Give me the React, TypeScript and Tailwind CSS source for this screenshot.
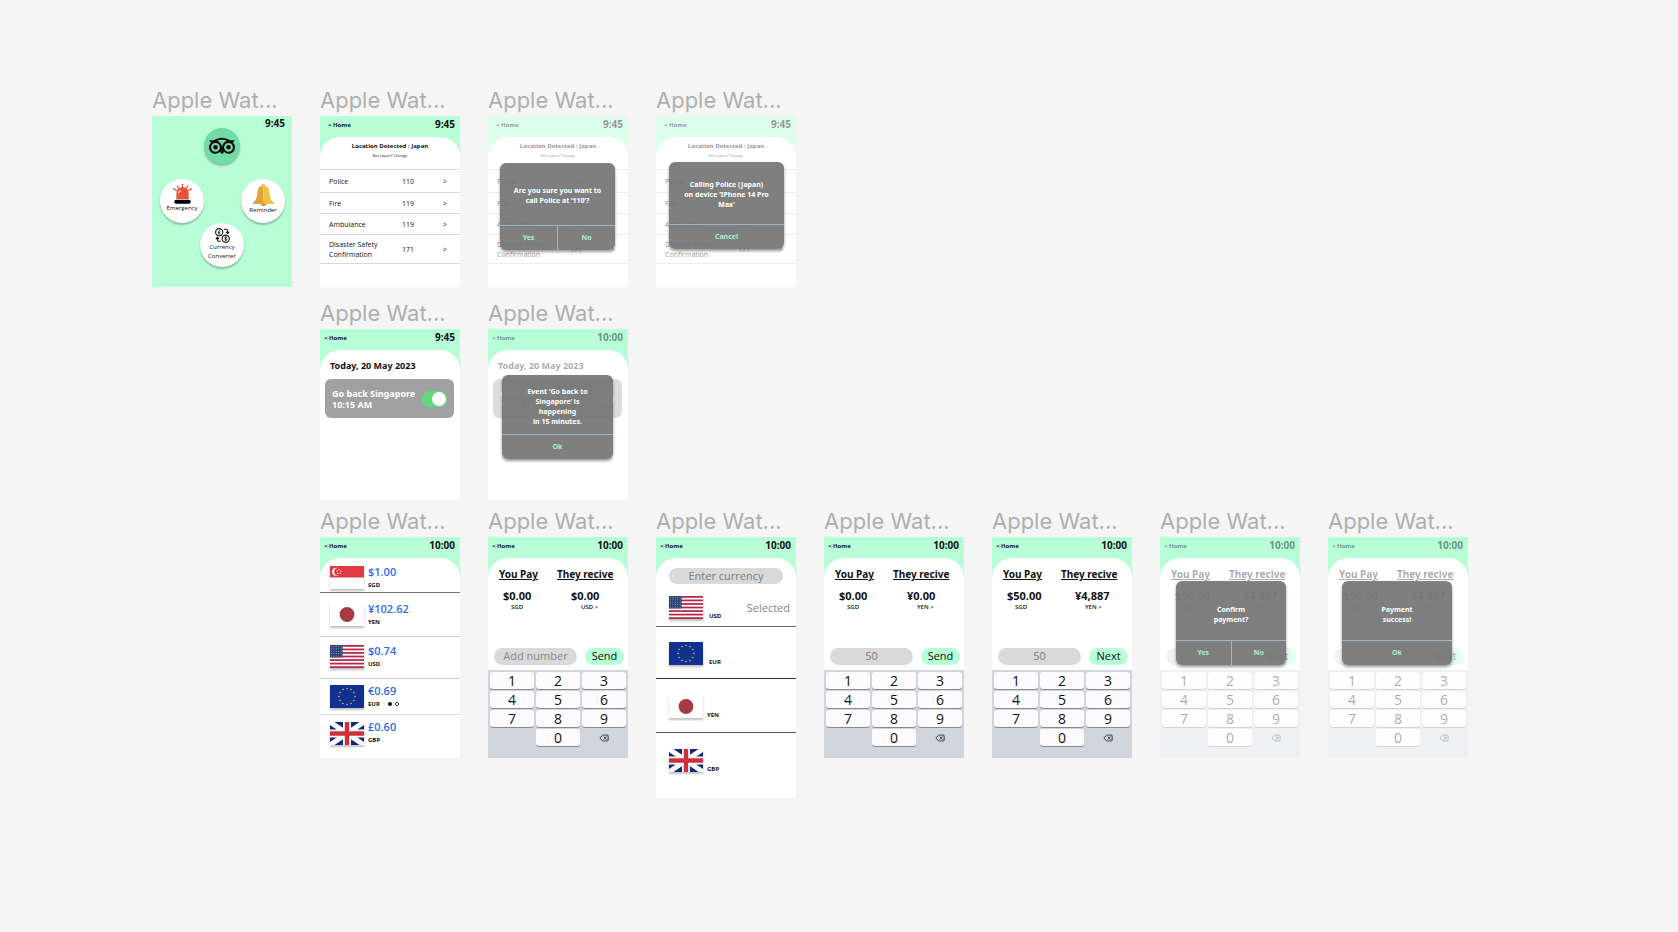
import type { ReactNode } from "react";
import { Delete } from "lucide-react";
import { SiTripadvisor } from "react-icons/si";

type Country = "SG" | "JP" | "US" | "EU" | "UK";

const COUNTRY_NAMES: Record<Country, string> = {
  SG: "Singapore",
  JP: "Japan",
  US: "United States",
  EU: "European Union",
  UK: "United Kingdom",
};

const STARS = Array.from({ length: 12 }, (_, i) => {
  const angle = (i * Math.PI) / 6;
  return { x: 17 + 8 * Math.sin(angle), y: 11.5 - 8 * Math.cos(angle) };
});

function FlagArt({ country }: { country: Country }) {
  switch (country) {
    case "SG":
      return (
        <>
          <rect width="34" height="23" fill="#fff" />
          <rect width="34" height="11.5" fill="#df3b40" />
          <circle cx="6.2" cy="5.7" r="4" fill="#fff" />
          <circle cx="7.8" cy="5.7" r="3.7" fill="#df3b40" />
          <g fill="#fff">
            <circle cx="9" cy="3.6" r="0.7" />
            <circle cx="7.2" cy="5" r="0.7" />
            <circle cx="11" cy="5" r="0.7" />
            <circle cx="7.9" cy="7.4" r="0.7" />
            <circle cx="10.3" cy="7.4" r="0.7" />
          </g>
        </>
      );
    case "JP":
      return (
        <>
          <rect width="34" height="23" fill="#fff" />
          <circle cx="17" cy="11.5" r="7.4" fill="#a43a42" />
        </>
      );
    case "US":
      return (
        <>
          <rect width="34" height="23" fill="#fff" />
          {[0, 1, 2, 3, 4, 5, 6].map((i) => (
            <rect key={i} y={i * 3.54} width="34" height="1.77" fill="#b22c4a" />
          ))}
          <rect width="12.6" height="12.4" fill="#2b4372" />
          {[0, 1, 2, 3, 4].map((r) =>
            [0, 1, 2, 3, 4].map((c) => (
              <circle key={`${r}-${c}`} cx={1.5 + c * 2.4} cy={1.5 + r * 2.35} r="0.5" fill="#a9b6cf" />
            )),
          )}
        </>
      );
    case "EU":
      return (
        <>
          <rect width="34" height="23" fill="#113092" />
          {STARS.map((s, i) => (
            <circle key={i} cx={s.x} cy={s.y} r="0.8" fill="#d9c63a" />
          ))}
        </>
      );
    case "UK":
      return (
        <>
          <rect width="34" height="23" fill="#12297e" />
          <path d="M0 0L34 23M34 0L0 23" stroke="#fff" strokeWidth="5" />
          <path d="M17 0V23M0 11.5H34" stroke="#fff" strokeWidth="8" />
          <path d="M17 0V23M0 11.5H34" stroke="#cd3038" strokeWidth="4.4" />
        </>
      );
  }
}

function Flag({ country }: { country: Country }) {
  return (
    <svg
      viewBox="0 0 34 23"
      role="img"
      aria-label={COUNTRY_NAMES[country]}
      className="h-[23px] w-[34px] shrink-0 shadow-[0_2px_2px_rgba(0,0,0,0.25)]"
    >
      <FlagArt country={country} />
    </svg>
  );
}

function SirenIcon() {
  return (
    <svg viewBox="0 0 19 20" className="h-5 w-[19px]" aria-hidden="true">
      <path d="M3.4 15V9.2a6.1 6.1 0 0 1 12.2 0V15z" fill="#e8503a" />
      <path
        d="M9.5 0v4M4 1.6l2 3.2M15 1.6l-2 3.2M0 4.6l4 2M19 4.6l-4 2"
        stroke="#e8503a"
        strokeWidth="1.2"
      />
      <path d="M5.6 9.4a3.4 3.4 0 0 1 2-2.9" stroke="#fff" strokeWidth="1.1" fill="none" />
      <rect x="1.2" y="15.8" width="16.6" height="4" rx="2" fill="#000" />
    </svg>
  );
}

function BellIcon() {
  return (
    <svg viewBox="0 0 21 22" className="h-[22px] w-[21px]" aria-hidden="true">
      <circle cx="10.5" cy="19.4" r="2.6" fill="#e0862f" />
      <path
        d="M10.5 0a1.8 1.8 0 0 0-1.8 1.9C5.600 2.700 4.700 5 4.500 8c-.3 5-1.200 8-4.300 10.600V20h10.300z"
        fill="#e5a13c"
      />
      <path
        d="M10.5 0a1.8 1.8 0 0 1 1.8 1.9C15.400 2.700 16.300 5 16.500 8c.3 5 1.200 8 4.300 10.600V20H10.500z"
        fill="#ecc544"
      />
    </svg>
  );
}

function ExchangeIcon() {
  return (
    <svg
      viewBox="0 0 15 15"
      className="h-[15px] w-[15px]"
      fill="none"
      stroke="#111"
      strokeWidth="1.1"
      aria-hidden="true"
    >
      <circle cx="4.2" cy="4.2" r="3.6" />
      <circle cx="10.7" cy="10.7" r="3.6" />
      <path d="M5.500 2.900C4.600 2.200 3.600 2.600 3.800 3.700L4 5.800M2.900 4.300H5M3 5.900H5.600" strokeWidth="0.8" />
      <path
        d="M12 9.600C11 8.700 9.500 9.100 9.600 9.900C9.700 10.900 11.900 10.500 11.900 11.600C11.800 12.500 10.200 12.500 9.500 11.800M10.700 8.400V13"
        strokeWidth="0.8"
      />
      <path d="M9 1.300H11.200A1.400 1.400 0 0 1 12.600 2.700V5.200M11 3.900L12.600 5.500L14.200 3.900" />
      <path d="M5.800 13.200H3.800A1.400 1.400 0 0 1 2.400 11.800V9.700M.8 11L2.400 9.400L4 11" />
    </svg>
  );
}

function Artboard({ className = "", children }: { className?: string; children: ReactNode }) {
  return (
    <section className={`w-[140px] ${className}`}>
      <h2 className="h-9 truncate pt-1 font-[Inter,sans-serif] text-[22px] leading-8 text-[#afafaf]">
        Apple Wat...
      </h2>
      {children}
    </section>
  );
}

type Dim = "none" | "all" | "content";

interface ScreenProps {
  time: string;
  size?: "short" | "tall" | "long";
  homeInset?: "wide" | "narrow";
  dim?: Dim;
  dialog?: ReactNode;
  children: ReactNode;
}

function Screen({ time, size = "short", homeInset = "narrow", dim = "none", dialog, children }: ScreenProps) {
  const heights = { short: "h-[171px]", tall: "h-[221px]", long: "h-[261px]" };
  return (
    <div className={`relative bg-white ${heights[size]}`}>
      <div className={`flex h-full flex-col bg-[#b7fed7] ${dim === "all" ? "opacity-45" : ""}`}>
        <header
          className={`flex h-[21px] shrink-0 items-start justify-between pr-[5px] ${
            homeInset === "wide" ? "pl-2" : "pl-1"
          } ${dim === "content" ? "opacity-45" : ""}`}
        >
          <a href="#home" className="pt-[3px] font-['Noto_Sans',sans-serif] text-[6px] leading-3 font-bold">
            &lt; Home
          </a>
          <time className="pt-[2px] text-[10px] leading-3 font-bold">{time}</time>
        </header>
        <div className="min-h-0 grow rounded-t-[20px] bg-white">
          <div className={`flex h-full flex-col ${dim === "content" ? "opacity-35" : ""}`}>{children}</div>
        </div>
      </div>
      {dialog}
    </div>
  );
}

interface DialogProps {
  placement: string;
  actions: string[];
  inset?: string;
  children: ReactNode;
}

function Dialog({ placement, actions, inset = "pt-1", children }: DialogProps) {
  return (
    <div
      role="dialog"
      className={`absolute flex flex-col overflow-hidden rounded-md bg-[#717171]/90 font-['Noto_Sans',sans-serif] shadow-[0_2px_3px_rgba(0,0,0,0.4)] ${placement}`}
    >
      <p
        className={`flex grow flex-col justify-center text-center text-[7px] leading-[10px] font-bold text-white ${inset}`}
      >
        {children}
      </p>
      <div className="flex h-[25px] shrink-0 divide-x divide-[#9fb6d3] border-t border-[#9fb6d3]">
        {actions.map((action) => (
          <button key={action} type="button" className="flex-1 text-[7px] leading-3 font-bold text-[#a9f0cf]">
            {action}
          </button>
        ))}
      </div>
    </div>
  );
}

const CONTACTS = [
  { name: "Police", number: "110", height: "h-[23px]" },
  { name: "Fire", number: "119", height: "h-[21px]" },
  { name: "Ambulance", number: "119", height: "h-[21px]" },
  { name: "Disaster Safety Confirmation", number: "171", height: "h-[29px]" },
];

function EmergencyContent() {
  return (
    <>
      <div className="flex h-8 flex-col items-center pt-1 text-center">
        <p className="text-[6px] leading-[10px] font-bold">Location Detected : Japan</p>
        <p className="text-[4px] leading-[10px]">
          Not Japan? <a href="#change">Change</a>
        </p>
      </div>
      <table className="w-full table-fixed border-t border-[#d9d9d9] text-[7px] leading-[10px]">
        <tbody>
          {CONTACTS.map((c) => (
            <tr key={c.name} className={`border-b border-[#d9d9d9] ${c.height}`}>
              <td className="w-[82px] pt-[2px] pr-4 pb-0 pl-[9px]">{c.name}</td>
              <td className="px-0 pt-[2px] pb-0">{c.number}</td>
              <td className="w-[17px] px-0 pt-[2px] pb-0">
                <button type="button" aria-label={`Call ${c.name}`}>
                  &gt;
                </button>
              </td>
            </tr>
          ))}
        </tbody>
      </table>
    </>
  );
}

function ReminderContent() {
  return (
    <>
      <h3 className="pt-[10px] pl-[10px] font-['Noto_Sans',sans-serif] text-[9px] leading-3 font-bold">
        Today, 20 May 2023
      </h3>
      <div className="mr-[6px] ml-[5px] mt-[7px] flex h-[39px] items-center justify-between rounded-md bg-[#a1a1a1] pr-[7px] pl-[7px]">
        <label
          htmlFor="go-back"
          className="font-['Noto_Sans',sans-serif] text-[9px] leading-[11px] font-bold whitespace-nowrap text-white"
        >
          Go back Singapore
          <br />
          10:15 AM
        </label>
        <input
          id="go-back"
          type="checkbox"
          role="switch"
          defaultChecked
          className="h-4 w-[25px] shrink-0 appearance-none rounded-full bg-[#5fd97d] p-px before:ml-auto before:block before:size-[14px] before:rounded-full before:bg-white"
        />
      </div>
    </>
  );
}

interface Rate {
  country: Country;
  price: string;
  code: string;
  row: string;
}

const RATES: Rate[] = [
  { country: "SG", price: "$1.00", code: "SGD", row: "h-[35px] pt-[5px] border-b border-[#777]" },
  { country: "JP", price: "¥102.62", code: "YEN", row: "h-11 border-b border-[#cfcfcf]" },
  { country: "US", price: "$0.74", code: "USD", row: "h-[42px] pb-[2px] border-b border-[#cfcfcf]" },
  { country: "EU", price: "€0.69", code: "EUR", row: "h-9 border-b border-[#dedede]" },
  { country: "UK", price: "£0.60", code: "GBP", row: "h-10 pb-1" },
];

function RatesContent() {
  return (
    <ul>
      {RATES.map((r) => (
        <li key={r.code} className={`flex items-center gap-1 pl-[10px] ${r.row}`}>
          <Flag country={r.country} />
          <div>
            <p className="text-[11px] leading-[14px] font-semibold text-[#2c6bf2]">{r.price}</p>
            <p className="flex items-center text-[6px] leading-3 font-bold">
              {r.code}
              {r.code === "EUR" && (
                <span className="ml-2 flex gap-[3px]">
                  <span className="size-1 rounded-full bg-black" />
                  <svg viewBox="0 0 4 4" className="size-1" aria-hidden="true">
                    <circle cx="2" cy="2" r="1.600" fill="none" stroke="#000" strokeWidth="0.700" />
                  </svg>
                </span>
              )}
            </p>
          </div>
        </li>
      ))}
    </ul>
  );
}

const PICKER: { country: Country; code: string; row: string; selected?: boolean }[] = [
  { country: "US", code: "USD", row: "h-[43px] gap-1.5 pt-3 border-b border-[#666]", selected: true },
  { country: "EU", code: "EUR", row: "h-[52px] gap-1.5 pt-[15px] border-b border-[#333]" },
  { country: "JP", code: "YEN", row: "h-[54px] gap-1 pt-4 border-b border-[#555]" },
  { country: "UK", code: "GBP", row: "h-16 gap-1 pt-4" },
];

function PickerContent() {
  return (
    <>
      <input
        type="text"
        aria-label="Currency"
        placeholder="Enter currency"
        className="mx-[13px] mt-[10px] h-4 rounded-full bg-[#d9d9d9] pb-0.5 text-center text-[11px] leading-[14px] placeholder:text-[#7c7c7c]"
      />
      <ul>
        {PICKER.map((p) => (
          <li key={p.code} className={`flex items-start pr-1.5 pl-[13px] ${p.row}`}>
            <Flag country={p.country} />
            <span className="pt-4 text-[6px] leading-2 font-bold">{p.code}</span>
            {p.selected && <span className="ml-auto pt-1 text-[11px] leading-4 text-[#858585]">Selected</span>}
          </li>
        ))}
      </ul>
    </>
  );
}

function Keypad() {
  const key =
    "h-[17px] rounded-[3px] bg-[#fcfcfe] pt-px text-[14px] leading-4 shadow-[0_1px_0_#898a8d]";
  return (
    <div className="grid h-[88px] grid-cols-3 content-start gap-x-0.5 gap-y-0.5 bg-[#d1d5dd] px-0.5 pt-0.5">
      {["1", "2", "3", "4", "5", "6", "7", "8", "9"].map((n) => (
        <button key={n} type="button" className={key}>
          {n}
        </button>
      ))}
      <button type="button" className={`col-start-2 ${key}`}>
        0
      </button>
      <button type="button" aria-label="Delete" className="flex items-center justify-center">
        <Delete className="size-[10px]" strokeWidth={1.8} />
      </button>
    </div>
  );
}

interface PaymentProps {
  pay: string;
  receive: string;
  currency: string;
  amount?: string;
  action: string;
}

function PaymentContent({ pay, receive, currency, amount, action }: PaymentProps) {
  const heading = "font-['Noto_Sans',sans-serif] text-[10px] leading-[14px] font-bold underline";
  return (
    <>
      <div className="flex pt-[9px] pl-[11px]">
        <div className="w-[58px]">
          <h3 className={heading}>You Pay</h3>
          <p className="mt-2 pl-1 text-[11px] leading-[14px] font-bold">{pay}</p>
          <p className="pl-3 text-[6px] leading-2 font-semibold">SGD</p>
        </div>
        <div>
          <h3 className={heading}>They recive</h3>
          <p className="mt-2 pl-[14px] text-[11px] leading-[14px] font-bold">{receive}</p>
          <button type="button" className="block pl-6 text-[6px] leading-2 font-semibold">
            {currency} &gt;
          </button>
        </div>
      </div>
      <div className="mt-auto mb-[5px] flex h-[17px] justify-between pr-1 pl-1.5">
        <input
          type="text"
          aria-label="Amount"
          placeholder="Add number"
          defaultValue={amount}
          className="w-[83px] rounded-full bg-[#d9d9d9] pb-0.5 text-center text-[11px] leading-[15px] text-[#7c7c7c] placeholder:text-[#8a8a8a]"
        />
        <button type="button" className="w-[39px] rounded-full bg-[#b7fed7] pb-0.5 text-[11px] leading-[15px]">
          {action}
        </button>
      </div>
      <Keypad />
    </>
  );
}

function HomeButton({ label, children }: { label: ReactNode; children: ReactNode }) {
  return (
    <button
      type="button"
      className="flex size-11 flex-col items-center rounded-full bg-white pt-[5px] text-[6px] leading-[9px] shadow-[0_2px_2px_rgba(0,0,0,0.25)]"
    >
      {children}
      {label}
    </button>
  );
}

function HomeScreen() {
  return (
    <div className="h-[171px] bg-[#b7fed7]">
      <header className="flex h-3 justify-end pt-px pr-[7px]">
        <time className="text-[10px] leading-3 font-bold">9:45</time>
      </header>
      <div className="flex flex-col items-center">
        <div className="flex size-9 items-center justify-center rounded-full bg-[#73dca6] shadow-[0_2px_2px_rgba(0,0,0,0.25)]">
          <SiTripadvisor className="size-[26px]" aria-label="Tripadvisor" />
        </div>
        <div className="mt-[15px] flex w-full justify-between pr-[7px] pl-2">
          <HomeButton label="Emergency">
            <SirenIcon />
          </HomeButton>
          <HomeButton label="Reminder">
            <BellIcon />
          </HomeButton>
        </div>
        <HomeButton
          label={
            <span>
              Currency
              <br />
              Converter
            </span>
          }
        >
          <ExchangeIcon />
        </HomeButton>
      </div>
    </div>
  );
}

export default function App() {
  return (
    <main className="min-h-screen bg-[#f5f5f5] pt-20 pl-[152px] font-['Open_Sans','Noto_Sans',sans-serif] text-[#111]">
      <div className="grid grid-cols-[repeat(8,140px)] gap-x-7">
        <Artboard>
          <HomeScreen />
        </Artboard>
        <Artboard>
          <Screen time="9:45" homeInset="wide">
            <EmergencyContent />
          </Screen>
        </Artboard>
        <Artboard>
          <Screen
            time="9:45"
            homeInset="wide"
            dim="all"
            dialog={
              <Dialog placement="top-[47px] left-3 h-[87px] w-[115px]" actions={["Yes", "No"]}>
                <span>Are you sure you want to</span>
                <span>call Police at ‘110’?</span>
              </Dialog>
            }
          >
            <EmergencyContent />
          </Screen>
        </Artboard>
        <Artboard>
          <Screen
            time="9:45"
            homeInset="wide"
            dim="all"
            dialog={
              <Dialog placement="top-[46px] left-[13px] h-[87px] w-[115px]" actions={["Cancel"]}>
                <span>Calling Police (Japan)</span>
                <span>on device ‘IPhone 14 Pro</span>
                <span>Max’</span>
              </Dialog>
            }
          >
            <EmergencyContent />
          </Screen>
        </Artboard>
      </div>

      <div className="mt-1.5 grid grid-cols-[repeat(8,140px)] gap-x-7">
        <Artboard className="col-start-2">
          <Screen time="9:45">
            <ReminderContent />
          </Screen>
        </Artboard>
        <Artboard>
          <Screen
            time="10:00"
            dim="content"
            dialog={
              <Dialog placement="top-[46px] left-[14px] h-[84px] w-[111px]" actions={["Ok"]}>
                <span>Event ‘Go back to</span>
                <span>Singapore’ is</span>
                <span>happening</span>
                <span>in 15 minutes.</span>
              </Dialog>
            }
          >
            <ReminderContent />
          </Screen>
        </Artboard>
      </div>

      <div className="mt-px grid grid-cols-[repeat(8,140px)] gap-x-7">
        <Artboard className="col-start-2">
          <Screen time="10:00" size="tall">
            <RatesContent />
          </Screen>
        </Artboard>
        <Artboard>
          <Screen time="10:00" size="tall">
            <PaymentContent pay="$0.00" receive="$0.00" currency="USD" action="Send" />
          </Screen>
        </Artboard>
        <Artboard>
          <Screen time="10:00" size="long">
            <PickerContent />
          </Screen>
        </Artboard>
        <Artboard>
          <Screen time="10:00" size="tall">
            <PaymentContent pay="$0.00" receive="¥0.00" currency="YEN" amount="50" action="Send" />
          </Screen>
        </Artboard>
        <Artboard>
          <Screen time="10:00" size="tall">
            <PaymentContent pay="$50.00" receive="¥4,887" currency="YEN" amount="50" action="Next" />
          </Screen>
        </Artboard>
        <Artboard>
          <Screen
            time="10:00"
            size="tall"
            dim="content"
            dialog={
              <Dialog placement="top-11 left-4 h-[84px] w-[110px]" actions={["Yes", "No"]} inset="pt-2">
                <span>Confirm</span>
                <span>payment?</span>
              </Dialog>
            }
          >
            <PaymentContent pay="$50.00" receive="¥4,887" currency="YEN" amount="50" action="Next" />
          </Screen>
        </Artboard>
        <Artboard>
          <Screen
            time="10:00"
            size="tall"
            dim="content"
            dialog={
              <Dialog placement="top-11 left-[14px] h-[84px] w-[110px]" actions={["Ok"]} inset="pt-2">
                <span>Payment</span>
                <span>success!</span>
              </Dialog>
            }
          >
            <PaymentContent pay="$50.00" receive="¥4,887" currency="YEN" amount="50" action="Next" />
          </Screen>
        </Artboard>
      </div>
    </main>
  );
}
